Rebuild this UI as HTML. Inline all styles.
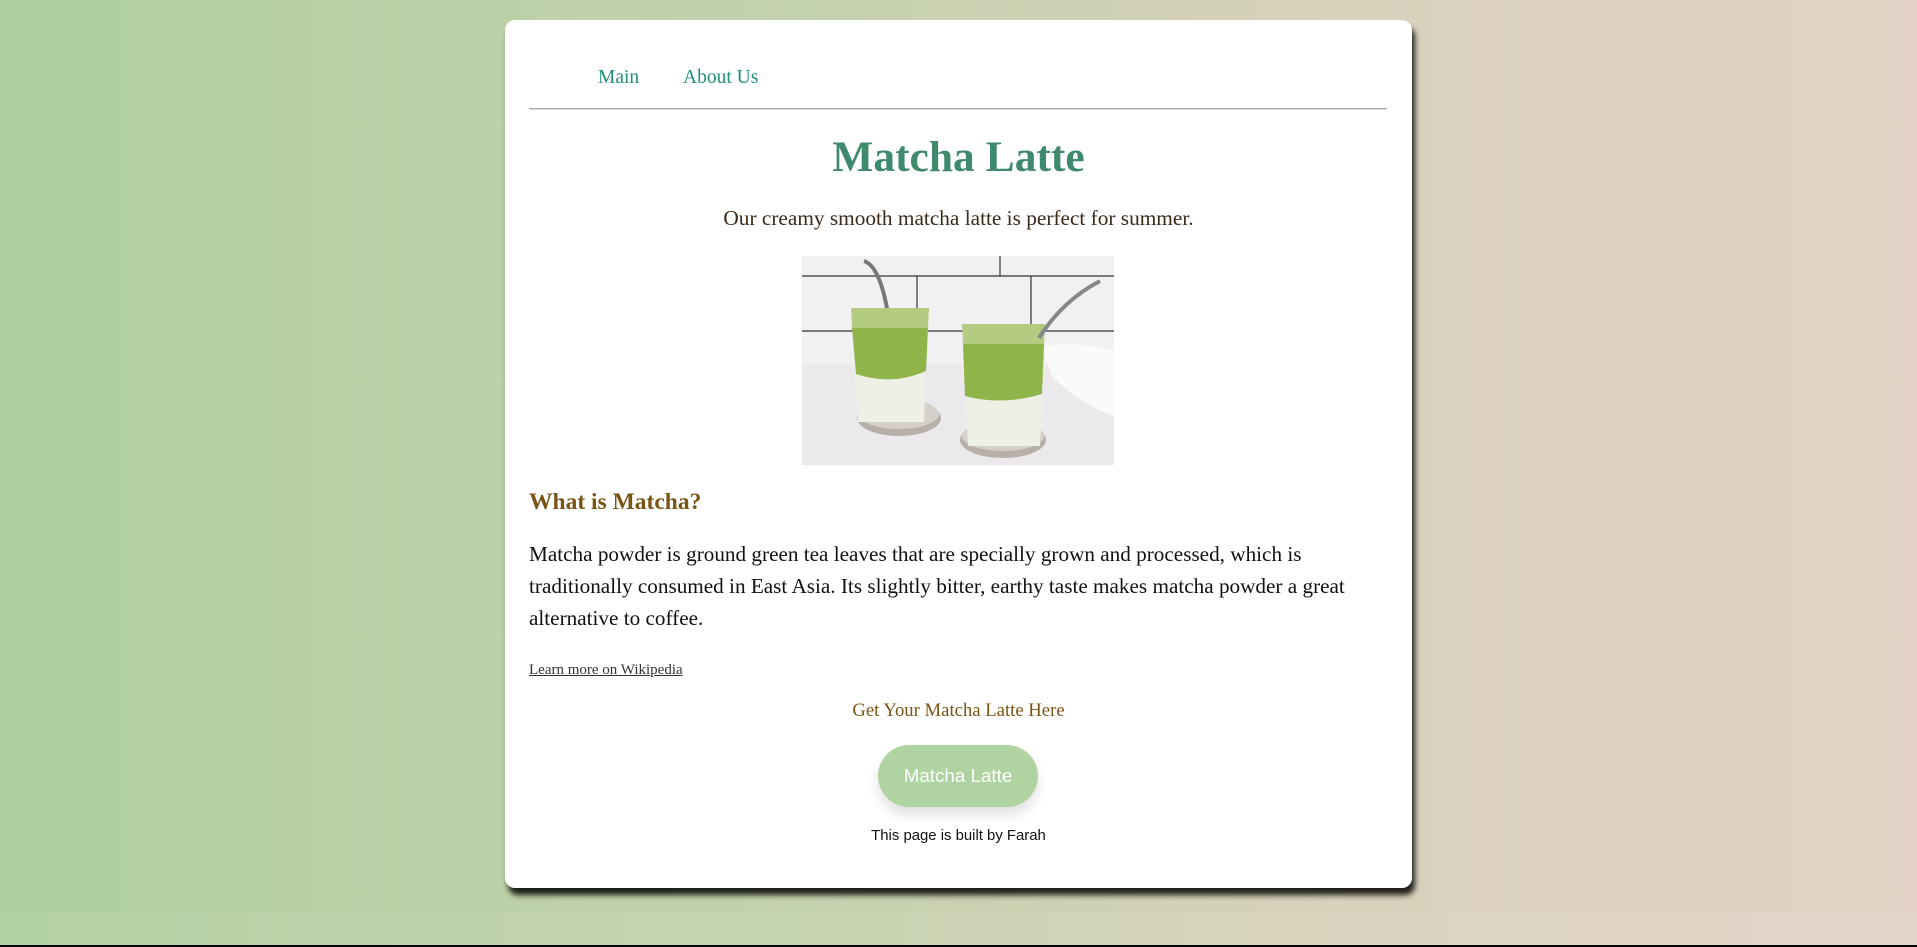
<!DOCTYPE html>
<html><head><meta charset="utf-8"><style>
html,body{margin:0;padding:0;}
body{width:1917px;height:947px;position:relative;overflow:hidden;background:#000;font-family:"Liberation Serif",serif;}
.bg{position:absolute;left:0;top:0;width:1917px;height:945px;background:linear-gradient(90deg,#aed09e 0%,#c6d1ae 45%,#d8d1bc 70%,#e3d2c5 100%);}
.band{position:absolute;left:0;top:912px;width:1917px;height:33px;background:linear-gradient(90deg,#b2d2a2 0%,#c9d4b2 45%,#dbd4c0 70%,#e4d4c8 100%);}
.card{position:absolute;left:505px;top:20px;width:907px;height:868px;background:#fff;border-radius:10px;box-shadow:3px 7px 6px rgba(0,0,0,.85);}
.a{position:absolute;white-space:nowrap;}
</style></head><body>
<div class="bg"></div><div class="band"></div>
<div class="card">
 <div class="a" style="left:93px;top:47px;font-size:19.5px;color:#1f8f7c">Main</div>
 <div class="a" style="left:178px;top:47px;font-size:19.5px;color:#1f8f7c">About Us</div>
 <div style="position:absolute;left:24px;top:88px;width:858px;height:1px;background:#aaa;border-bottom:1px solid #ddd"></div>
 <div class="a" style="left:0;width:907px;text-align:center;top:112px;font-size:43.5px;font-weight:bold;color:#3f8a6c">Matcha Latte</div>
 <div class="a" style="left:0;width:907px;text-align:center;top:186px;font-size:21.3px;color:#3b2a18">Our creamy smooth matcha latte is perfect for summer.</div>
 <svg style="position:absolute;left:297px;top:236px" width="312" height="209" viewBox="0 0 312 209">
  <rect width="312" height="209" fill="#f1f0f2"/>
  <rect y="108" width="312" height="101" fill="#ebe9ec"/>
  <g stroke="#333" stroke-width="1.2" fill="none">
   <line x1="0" y1="20" x2="312" y2="20"/><line x1="0" y1="75" x2="312" y2="75"/>
   <line x1="198" y1="0" x2="198" y2="20"/><line x1="115" y1="20" x2="115" y2="75"/><line x1="229" y1="20" x2="229" y2="75"/>
  </g>
  <path d="M240 90 Q285 85 312 95 L312 160 Q280 150 250 120Z" fill="#fafafa"/>
  <ellipse cx="97" cy="162" rx="42" ry="18" fill="#b8b0a8"/>
  <ellipse cx="97" cy="158" rx="40" ry="15" fill="#d4cfca"/>
  <ellipse cx="201" cy="184" rx="43" ry="18" fill="#b8b0a8"/>
  <ellipse cx="201" cy="180" rx="41" ry="15" fill="#d4cfca"/>
  <path d="M62 5 Q78 10 86 58" stroke="#777" stroke-width="4" fill="none"/>
  <path d="M49 52 L127 52 L122 166 L56 166Z" fill="#eef0e6"/>
  <path d="M50 72 L126 72 L124 115 Q90 130 54 118Z" fill="#8fb54a"/>
  <path d="M49 52 L127 52 L126 72 L50 72Z" fill="#b3cc82"/>
  <path d="M160 68 L243 68 L238 190 L166 190Z" fill="#eef0e6"/>
  <path d="M161 88 L242 88 L240 138 Q200 150 163 140Z" fill="#8fb54a"/>
  <path d="M160 68 L243 68 L242 88 L161 88Z" fill="#b3cc82"/>
  <path d="M237 82 Q260 45 298 25" stroke="#888" stroke-width="4" fill="none"/>
 </svg>
 <div class="a" style="left:24px;top:469px;font-size:23.5px;font-weight:bold;color:#7a5412">What is Matcha?</div>
 <div class="a" style="left:24px;top:518px;width:858px;white-space:normal;font-size:21.2px;line-height:32px;color:#111">Matcha powder is ground green tea leaves that are specially grown and processed, which is traditionally consumed in East Asia. Its slightly bitter, earthy taste makes matcha powder a great alternative to coffee.</div>
 <div class="a" style="left:24px;top:642px;font-size:15px;color:#333;text-decoration:underline">Learn more on Wikipedia</div>
 <div class="a" style="left:0;width:907px;text-align:center;top:680px;font-size:18.7px;color:#7a5412">Get Your Matcha Latte Here</div>
 <div class="a" style="left:373px;top:725px;width:160px;height:62px;border-radius:31px;background:#afd3a1;color:#fff;font-family:'Liberation Sans',sans-serif;font-size:18.8px;line-height:62px;text-align:center;box-shadow:0 8px 12px rgba(0,0,0,.12)">Matcha Latte</div>
 <div class="a" style="left:0;width:907px;text-align:center;top:808px;font-family:'Liberation Sans',sans-serif;font-size:14.9px;color:#111">This page is built by Farah</div>
</div>
</body></html>
